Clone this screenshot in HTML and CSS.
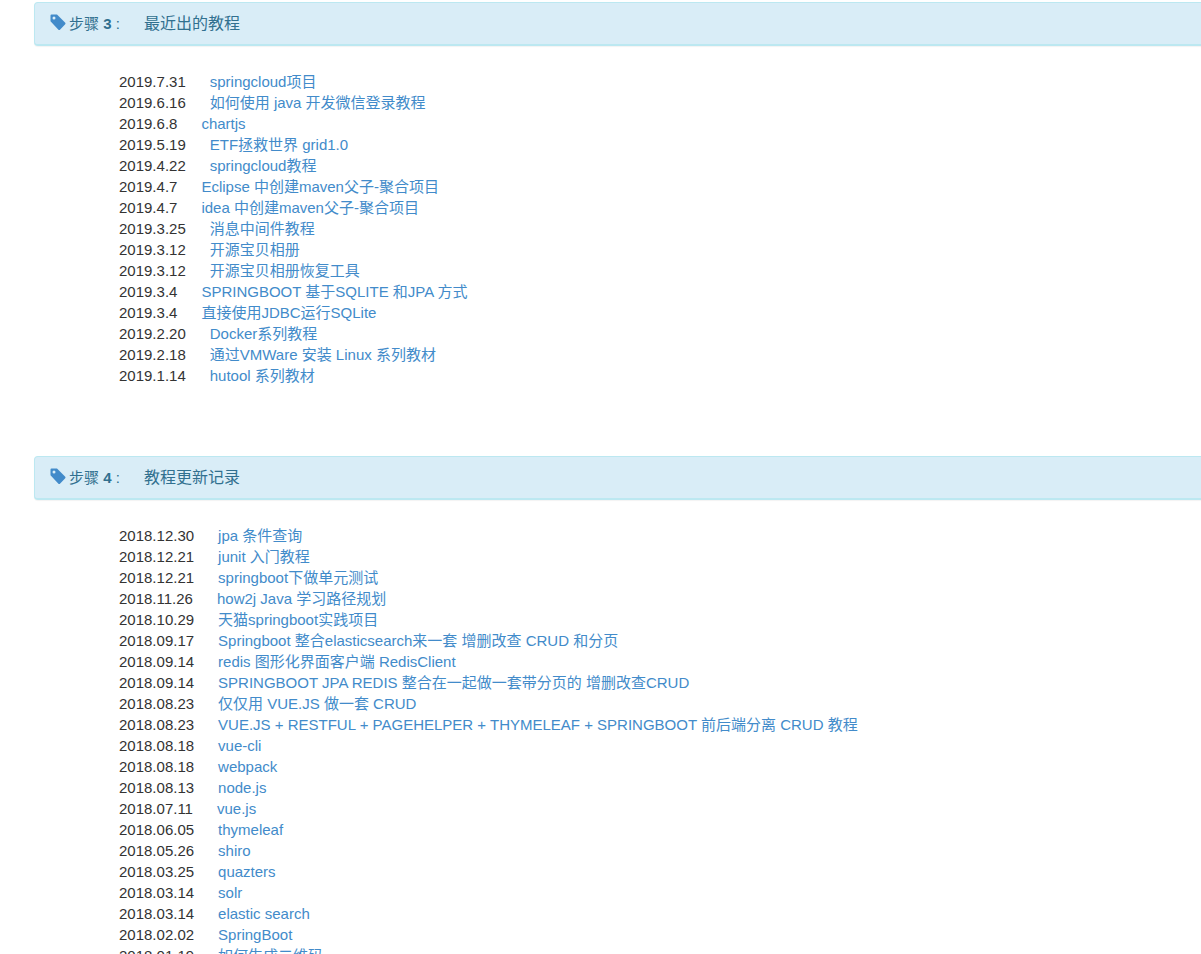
FILE: index.html
```html
<!DOCTYPE html>
<html lang="zh">
<head>
<meta charset="utf-8">
<title>教程</title>
<link rel="stylesheet" href="styles.css">
</head>
<body>
<section class="step">
  <div class="step-head">
    <svg class="tag" viewBox="0 0 16 16"><path d="M0.5 1.5 A1 1 0 0 1 1.5 .5 H7 L15 8.6 A1.4 1.4 0 0 1 15 10.6 L10.2 15.4 A1.4 1.4 0 0 1 8.2 15.4 L.5 7.2 Z M4 2.6 A1.5 1.5 0 1 0 4 5.6 A1.5 1.5 0 1 0 4 2.6 Z" fill-rule="evenodd"/></svg>
    <span class="step-label">步骤 <b>3</b> :</span>
    <span class="step-title">最近出的教程</span>
  </div>
  <div class="rows">
    <div>2019.7.31&nbsp;&nbsp;&nbsp;&nbsp;&nbsp;&nbsp;<a href="#">springcloud项目</a></div>
    <div>2019.6.16&nbsp;&nbsp;&nbsp;&nbsp;&nbsp;&nbsp;<a href="#">如何使用 java 开发微信登录教程</a></div>
    <div>2019.6.8&nbsp;&nbsp;&nbsp;&nbsp;&nbsp;&nbsp;<a href="#">chartjs</a></div>
    <div>2019.5.19&nbsp;&nbsp;&nbsp;&nbsp;&nbsp;&nbsp;<a href="#">ETF拯救世界 grid1.0</a></div>
    <div>2019.4.22&nbsp;&nbsp;&nbsp;&nbsp;&nbsp;&nbsp;<a href="#">springcloud教程</a></div>
    <div>2019.4.7&nbsp;&nbsp;&nbsp;&nbsp;&nbsp;&nbsp;<a href="#">Eclipse 中创建maven父子-聚合项目</a></div>
    <div>2019.4.7&nbsp;&nbsp;&nbsp;&nbsp;&nbsp;&nbsp;<a href="#">idea 中创建maven父子-聚合项目</a></div>
    <div>2019.3.25&nbsp;&nbsp;&nbsp;&nbsp;&nbsp;&nbsp;<a href="#">消息中间件教程</a></div>
    <div>2019.3.12&nbsp;&nbsp;&nbsp;&nbsp;&nbsp;&nbsp;<a href="#">开源宝贝相册</a></div>
    <div>2019.3.12&nbsp;&nbsp;&nbsp;&nbsp;&nbsp;&nbsp;<a href="#">开源宝贝相册恢复工具</a></div>
    <div>2019.3.4&nbsp;&nbsp;&nbsp;&nbsp;&nbsp;&nbsp;<a href="#">SPRINGBOOT 基于SQLITE 和JPA 方式</a></div>
    <div>2019.3.4&nbsp;&nbsp;&nbsp;&nbsp;&nbsp;&nbsp;<a href="#">直接使用JDBC运行SQLite</a></div>
    <div>2019.2.20&nbsp;&nbsp;&nbsp;&nbsp;&nbsp;&nbsp;<a href="#">Docker系列教程</a></div>
    <div>2019.2.18&nbsp;&nbsp;&nbsp;&nbsp;&nbsp;&nbsp;<a href="#">通过VMWare 安装 Linux 系列教材</a></div>
    <div>2019.1.14&nbsp;&nbsp;&nbsp;&nbsp;&nbsp;&nbsp;<a href="#">hutool 系列教材</a></div>
  </div>
</section>
<section class="step">
  <div class="step-head">
    <svg class="tag" viewBox="0 0 16 16"><path d="M0.5 1.5 A1 1 0 0 1 1.5 .5 H7 L15 8.6 A1.4 1.4 0 0 1 15 10.6 L10.2 15.4 A1.4 1.4 0 0 1 8.2 15.4 L.5 7.2 Z M4 2.6 A1.5 1.5 0 1 0 4 5.6 A1.5 1.5 0 1 0 4 2.6 Z" fill-rule="evenodd"/></svg>
    <span class="step-label">步骤 <b>4</b> :</span>
    <span class="step-title">教程更新记录</span>
  </div>
  <div class="rows">
    <div>2018.12.30&nbsp;&nbsp;&nbsp;&nbsp;&nbsp;&nbsp;<a href="#">jpa 条件查询</a></div>
    <div>2018.12.21&nbsp;&nbsp;&nbsp;&nbsp;&nbsp;&nbsp;<a href="#">junit 入门教程</a></div>
    <div>2018.12.21&nbsp;&nbsp;&nbsp;&nbsp;&nbsp;&nbsp;<a href="#">springboot下做单元测试</a></div>
    <div>2018.11.26&nbsp;&nbsp;&nbsp;&nbsp;&nbsp;&nbsp;<a href="#">how2j Java 学习路径规划</a></div>
    <div>2018.10.29&nbsp;&nbsp;&nbsp;&nbsp;&nbsp;&nbsp;<a href="#">天猫springboot实践项目</a></div>
    <div>2018.09.17&nbsp;&nbsp;&nbsp;&nbsp;&nbsp;&nbsp;<a href="#">Springboot 整合elasticsearch来一套 增删改查 CRUD 和分页</a></div>
    <div>2018.09.14&nbsp;&nbsp;&nbsp;&nbsp;&nbsp;&nbsp;<a href="#">redis 图形化界面客户端 RedisClient</a></div>
    <div>2018.09.14&nbsp;&nbsp;&nbsp;&nbsp;&nbsp;&nbsp;<a href="#">SPRINGBOOT JPA REDIS 整合在一起做一套带分页的 增删改查CRUD</a></div>
    <div>2018.08.23&nbsp;&nbsp;&nbsp;&nbsp;&nbsp;&nbsp;<a href="#">仅仅用 VUE.JS 做一套 CRUD</a></div>
    <div>2018.08.23&nbsp;&nbsp;&nbsp;&nbsp;&nbsp;&nbsp;<a href="#">VUE.JS + RESTFUL + PAGEHELPER + THYMELEAF + SPRINGBOOT 前后端分离 CRUD 教程</a></div>
    <div>2018.08.18&nbsp;&nbsp;&nbsp;&nbsp;&nbsp;&nbsp;<a href="#">vue-cli</a></div>
    <div>2018.08.18&nbsp;&nbsp;&nbsp;&nbsp;&nbsp;&nbsp;<a href="#">webpack</a></div>
    <div>2018.08.13&nbsp;&nbsp;&nbsp;&nbsp;&nbsp;&nbsp;<a href="#">node.js</a></div>
    <div>2018.07.11&nbsp;&nbsp;&nbsp;&nbsp;&nbsp;&nbsp;<a href="#">vue.js</a></div>
    <div>2018.06.05&nbsp;&nbsp;&nbsp;&nbsp;&nbsp;&nbsp;<a href="#">thymeleaf</a></div>
    <div>2018.05.26&nbsp;&nbsp;&nbsp;&nbsp;&nbsp;&nbsp;<a href="#">shiro</a></div>
    <div>2018.03.25&nbsp;&nbsp;&nbsp;&nbsp;&nbsp;&nbsp;<a href="#">quazters</a></div>
    <div>2018.03.14&nbsp;&nbsp;&nbsp;&nbsp;&nbsp;&nbsp;<a href="#">solr</a></div>
    <div>2018.03.14&nbsp;&nbsp;&nbsp;&nbsp;&nbsp;&nbsp;<a href="#">elastic search</a></div>
    <div>2018.02.02&nbsp;&nbsp;&nbsp;&nbsp;&nbsp;&nbsp;<a href="#">SpringBoot</a></div>
    <div>2018.01.19&nbsp;&nbsp;&nbsp;&nbsp;&nbsp;&nbsp;<a href="#">如何生成二维码</a></div>
  </div>
</section>
</body>
</html>
```
FILE: styles.css
```css
html, body {
  height: 954px;
  overflow: hidden;
}
body {
  margin: 0;
  padding: 2px 0 0 34px;
  box-sizing: border-box;
  background: #fff;
  color: #333;
  font-family: "Liberation Sans", "Noto Sans CJK SC", sans-serif;
  font-size: 15px;
  line-height: 21px;
}
.step {
  margin-right: -20px;
  margin-bottom: 70px;
}
.step-head {
  display: flex;
  align-items: center;
  height: 44px;
  box-sizing: border-box;
  padding-left: 15px;
  background: #d9edf7;
  border: 1px solid #bce8f1;
  border-bottom-width: 2px;
  border-radius: 4px;
  box-shadow: 0 1px 1px rgba(0, 0, 0, .05);
  color: #31708f;
}
.tag {
  width: 16px;
  height: 16px;
  fill: #428bca;
  margin-top: -4px;
  margin-right: 3px;
}
.step-label {
  width: 75px;
  font-size: 15px;
}
.step-title {
  font-size: 16px;
}
.rows {
  padding: 25px 0 0 85px;
}
.rows a {
  margin-left: -1px;
  color: #428bca;
  text-decoration: none;
}
```
